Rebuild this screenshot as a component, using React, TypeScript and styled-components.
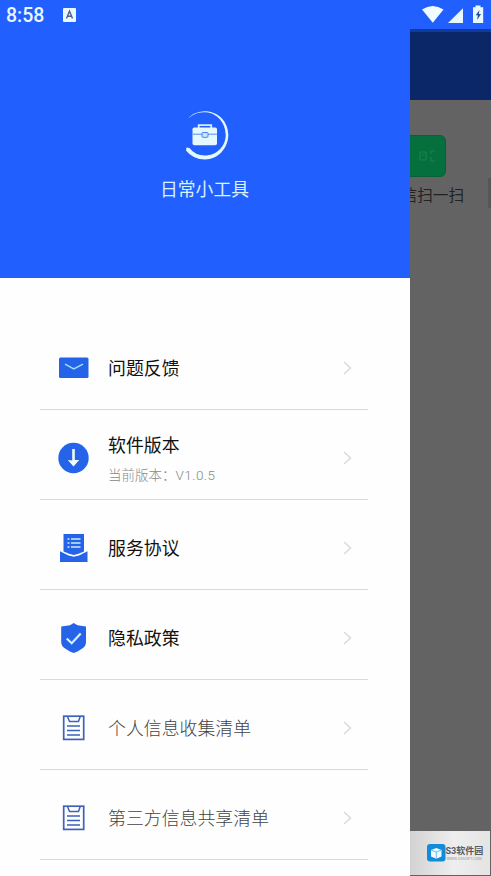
import React from "react";
import styled, { createGlobalStyle } from "styled-components";

const Global = createGlobalStyle`
  * { box-sizing: border-box; }
  body { margin: 0; background: #636363; font-family: Roboto, "Noto Sans CJK SC", sans-serif; }
  svg { display: block; }
`;

const Screen = styled.div`
  position: relative;
  width: 491px;
  height: 876px;
  overflow: hidden;
  background: #636363;
`;

const StatusBar = styled.header`
  position: absolute;
  z-index: 3;
  top: 0;
  left: 0;
  width: 100%;
  height: 30px;
  display: flex;
  align-items: center;
  justify-content: space-between;
  padding: 0 5px 0 6px;
  color: #e9f8ff;
`;

const StatusGroup = styled.div`
  display: flex;
  align-items: center;
  gap: 5px;
`;

const Clock = styled.span`
  width: 52px;
  font-size: 19.5px;
  line-height: 30px;
  font-weight: 500;
  padding-top: 1px;
`;

const Page = styled.main`
  height: 100%;
  display: flex;
  flex-direction: column;
`;

const StatusBacking = styled.div`
  height: 29px;
  background: #2160fe;
`;

const PageBar = styled.div`
  height: 71px;
  background: #0c2768;
  border-top: 3px solid #123ba0;
`;

const Shortcut = styled.div`
  display: flex;
  flex-direction: column;
  align-items: center;
  width: 100px;
  margin: 35px 0 0 375px;
`;

const ShortcutTile = styled.div`
  display: grid;
  place-items: center;
  width: 42px;
  height: 42px;
  border-radius: 6px;
  background: #05703d;
  border: 1px solid #086034;
`;

const ShortcutLabel = styled.span`
  margin-top: 8px;
  font-size: 15.6px;
  line-height: 22px;
  color: #222;
  white-space: nowrap;
`;

const ScrollMark = styled.div`
  position: absolute;
  right: 0;
  top: 178px;
  width: 3px;
  height: 30px;
  background: #565656;
`;

const Watermark = styled.div`
  position: absolute;
  left: 410px;
  top: 831px;
  width: 80px;
  height: 44px;
  display: flex;
  align-items: center;
  padding-left: 17px;
  background: linear-gradient(90deg, #d2d2d2, #eeeeee 55%, #e4e4e4);
`;

const WatermarkText = styled.div`
  display: flex;
  flex-direction: column;
  color: #555b63;
`;

const WatermarkName = styled.span`
  font-size: 9px;
  line-height: 10px;
  font-weight: 700;
  white-space: nowrap;
`;

const WatermarkUrl = styled.span`
  font-size: 4px;
  line-height: 5px;
  padding-left: 1px;
  color: #999;
`;

const Drawer = styled.aside`
  position: absolute;
  z-index: 2;
  left: 0;
  top: 0;
  width: 410px;
  height: 100%;
  background: #fefefe;
  display: flex;
  flex-direction: column;
`;

const Brand = styled.div`
  height: 278px;
  flex: none;
  display: flex;
  flex-direction: column;
  align-items: center;
  padding-top: 110px;
  background: #2160fe;
`;

const BrandName = styled.h1`
  margin: 15px 0 0;
  padding-right: 1px;
  font-size: 17.8px;
  line-height: 26px;
  font-weight: 400;
  color: #d8f2ff;
`;

const Menu = styled.nav`
  margin: 42px 42px 0 40px;
`;

const MenuRow = styled.div`
  height: 90px;
  display: flex;
  align-items: center;
  padding: 7px 15px 0 18px;
  border-bottom: 1px solid #d9d9d9;
`;

const IconSlot = styled.div`
  width: 32px;
  height: 32px;
  margin-right: 18px;
`;

const RowText = styled.div`
  flex: 1;
  display: flex;
  flex-direction: column;
  padding-top: 2px;
`;

const RowTitle = styled.span<{ $muted?: boolean }>`
  font-size: 17.9px;
  line-height: 26px;
  font-weight: ${(p) => (p.$muted ? 300 : 400)};
  color: ${(p) => (p.$muted ? "#444" : "#111")};
`;

const RowNote = styled.span`
  margin: 5px 0 0;
  font-size: 13.5px;
  line-height: 22px;
  font-weight: 300;
  color: #888;
  white-space: pre;
`;

const NoteVersion = styled.span`
  letter-spacing: 0.45px;
`;

const blue = "#2563e8";

const MailIcon = () => (
  <svg width="32" height="32" viewBox="0 0 32 32">
    <rect x="1" y="5.5" width="29.5" height="20.5" rx="1.5" fill={blue} />
    <path d="M7 12.2 15.8 16.8 25 12.2" fill="none" stroke="#9de0ff" strokeWidth="1.5" />
  </svg>
);

const DownloadIcon = () => (
  <svg width="32" height="32" viewBox="0 0 32 32">
    <circle cx="15.5" cy="16" r="15.2" fill={blue} />
    <path d="M14.2 7h2.6v11h4.4L15.5 24.5 9.8 18l4.4.5z" fill="#f2fbff" />
  </svg>
);

const AgreementIcon = () => (
  <svg width="32" height="32" viewBox="0 0 32 32">
    <path d="M5.5 2H26v17.5l-5.5 2.2-4.7 1.2-4.8-1.2-5.5-2.2z" fill={blue} />
    <path d="M2 19.3 10.5 23.6 15.8 24.8 21 23.6 29.5 19.3V30H2z" fill={blue} />
    <path d="M9.5 7h2M13 7h9.5M9.5 11h2M13 11h9.5M9.5 15h2M13 15h9.5" stroke="#c9edff" strokeWidth="1.4" />
  </svg>
);

const ShieldIcon = () => (
  <svg width="32" height="32" viewBox="0 0 32 32">
    <path d="M15.7 1 19.5 3.3 28 4.5V20q0 4-3.7 6.5l-4.8 3-3.8 1.5-3.8-1.5-4.8-3Q3.2 24 3.2 20V4.5L12 3.3z" fill={blue} />
    <path d="m8.7 16.5 5 4.7 9-9.7" fill="none" stroke="#d3f1ff" strokeWidth="2.2" />
  </svg>
);

const ClipboardIcon = () => (
  <svg width="32" height="32" viewBox="0 0 32 32" fill="none" stroke="#3d62bd">
    <rect x="5.7" y="4.2" width="20" height="23.2" strokeWidth="1.7" />
    <path d="M9.5 4.5 11.5 9.5H20.5L22.2 4.5" strokeWidth="1.5" />
    <path d="M9 14h13M9 18.5h13M9 23h13" strokeWidth="1.6" />
  </svg>
);

const Chevron = () => (
  <svg width="10" height="16" viewBox="0 0 10 16">
    <path d="m1 2 6.5 6L1 14" fill="none" stroke="#dadada" strokeWidth="1.5" />
  </svg>
);

const BrandIcon = () => (
  <svg width="48" height="52" viewBox="0 0 48 52">
    <path d="M4 12A24 24 0 0 1 25 1.2C38 2 47.3 12 47.3 25S37 49.5 24 49.5Q12 49.5 5 40.5L5.5 37.5 8.5 38Q14 45.5 24 45.5C35 45.5 44.7 37 44.7 25S36 3 25 2.3Q12 1.2 4 12z" fill="#e5f8ff" />
    <path d="M17.7 18v-2.8h12.5V18" fill="none" stroke="#d5f0ff" strokeWidth="1.8" />
    <rect x="11.5" y="17.5" width="24.5" height="17.7" rx="1.8" fill="#e5f8ff" />
    <path d="M12 24.2h9M27 24.2h9" stroke="#5488ff" />
    <rect x="21" y="22.5" width="6" height="4.8" rx="1" fill="#c8eaff" stroke="#4f80ed" />
  </svg>
);

const InputModeIcon = () => (
  <svg width="13" height="14" viewBox="0 0 13 14">
    <rect width="13" height="14" rx="1" fill="#e8f8ff" />
    <path d="m3.5 10.5 3-7.3 3 7.3M4.6 8.2h3.8" fill="none" stroke="#585f8c" strokeWidth="1.4" />
  </svg>
);

const SignalIcons = () => (
  <svg width="64" height="20" viewBox="0 0 64 20">
    <path d="M0 4.6Q10.7-2.5 21.5 4.6L10.8 17.8z" fill="#f0fcff" />
    <path d="M41 3.2V18H26z" fill="#e7f8ff" />
    <path d="M53.5 2.3V.5h5v1.8h2.7V18H51V2.3z" fill="#e7f8ff" />
    <path d="m57.5 5-3.8 5.2h2.1l-.6 4.8 3.8-6h-2.2z" fill="#284d9a" />
  </svg>
);

const ScanIcon = () => (
  <svg width="24" height="16" viewBox="0 0 24 16" fill="none" stroke="#1c8147">
    <path d="M7 4h6v8H7zM9 7h2M22 3h-4v3M18 9v4h4" strokeWidth="1.2" />
  </svg>
);

const CubeLogo = () => (
  <svg width="18.5" height="17.5" viewBox="0 0 18.5 17.5">
    <rect width="18.5" height="17.5" rx="3" fill="#128bd9" />
    <path d="m4 6 5.3-2 5.2 2v6.5l-5.2 2.3L4 12.5z" fill="#effaff" />
    <path d="m4 6 5.3 2 5.2-2M9.3 8v6.5" fill="none" stroke="#69bbea" />
  </svg>
);

const items = [
  { title: "问题反馈", icon: <MailIcon /> },
  { title: "软件版本", note: "当前版本：", version: "V1.0.5", icon: <DownloadIcon /> },
  { title: "服务协议", icon: <AgreementIcon /> },
  { title: "隐私政策", icon: <ShieldIcon /> },
  { title: "个人信息收集清单", muted: true, icon: <ClipboardIcon /> },
  { title: "第三方信息共享清单", muted: true, icon: <ClipboardIcon /> },
];

export default function App() {
  return (
    <Screen>
      <Global />
      <StatusBar>
        <StatusGroup>
          <Clock>8:58</Clock>
          <InputModeIcon />
        </StatusGroup>
        <SignalIcons />
      </StatusBar>
      <Page>
        <StatusBacking />
        <PageBar />
        <Shortcut>
          <ShortcutTile><ScanIcon /></ShortcutTile>
          <ShortcutLabel>微信扫一扫</ShortcutLabel>
        </Shortcut>
        <ScrollMark />
      </Page>
      <Drawer>
        <Brand>
          <BrandIcon />
          <BrandName>日常小工具</BrandName>
        </Brand>
        <Menu>
          {items.map((item) => (
            <MenuRow key={item.title}>
              <IconSlot>{item.icon}</IconSlot>
              <RowText>
                <RowTitle $muted={item.muted}>{item.title}</RowTitle>
                {item.note && (
                  <RowNote>
                    {item.note}
                    <NoteVersion>{item.version}</NoteVersion>
                  </RowNote>
                )}
              </RowText>
              <Chevron />
            </MenuRow>
          ))}
        </Menu>
      </Drawer>
      <Watermark>
        <CubeLogo />
        <WatermarkText>
          <WatermarkName>S3软件园</WatermarkName>
          <WatermarkUrl>WWW.S3SOFT.COM</WatermarkUrl>
        </WatermarkText>
      </Watermark>
    </Screen>
  );
}
